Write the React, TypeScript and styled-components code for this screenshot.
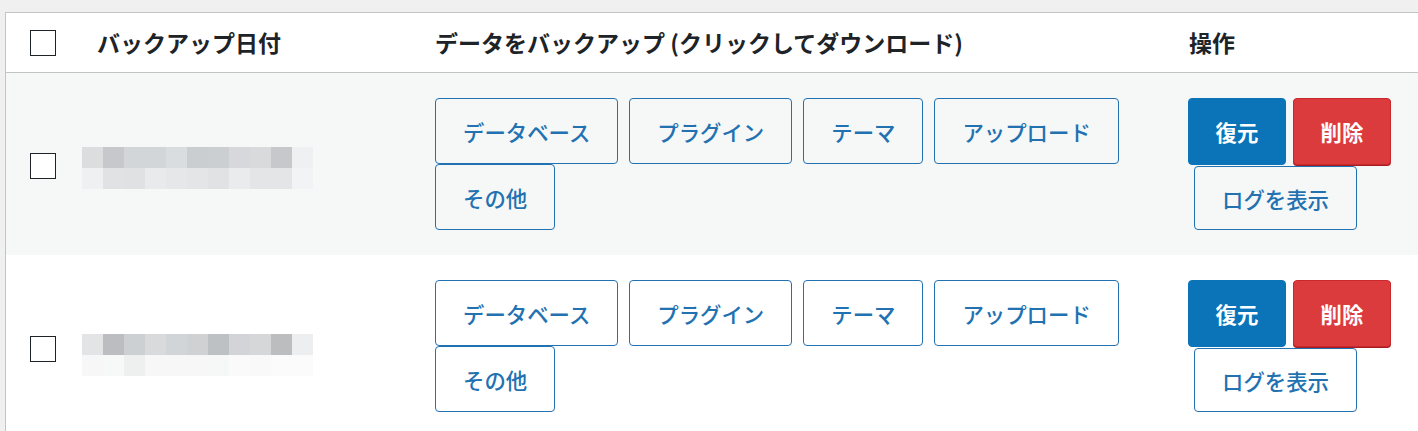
import React from "react";
import styled, { createGlobalStyle } from "styled-components";

const Global = createGlobalStyle`
  html, body { margin: 0; padding: 0; background: #f0f0f1; overflow: hidden; }
  body { font-family: "Noto Sans CJK JP", "Noto Sans", sans-serif; }
`;

const Page = styled.div`
  padding: 12px 0 0 5px;
`;

const Table = styled.div`
  width: 1440px;
  background: #fff;
  border: 1px solid #c3c4c7;
  border-right: none;
`;

const Grid = styled.div<{ $bg?: string }>`
  display: grid;
  grid-template-columns: 76px 343px 753px 1fr;
  align-items: center;
  background: ${(p) => p.$bg || "#fff"};
`;

const Header = styled(Grid)`
  height: 59px;
  border-bottom: 1px solid #c3c4c7;
`;

const HeadCell = styled.div<{ $pl?: number }>`
  padding-left: ${(p) => p.$pl ?? 10}px;
  font-size: 23px;
  font-weight: 700;
  color: #1d2327;
  white-space: nowrap;
  line-height: 1.3;
`;

const CheckCell = styled.div<{ $dy?: number }>`
  padding-left: 24px;
  display: flex;
  align-items: center;
  transform: translateY(${(p) => p.$dy ?? 0}px);
`;

const Check = styled.span`
  display: block;
  width: 24px;
  height: 24px;
  border: 1px solid #1d2327;
  background: #fff;
  box-sizing: content-box;
`;

const Row = styled(Grid)`
  padding: 25px 0;
`;

const BlurCell = styled.div<{ $dy?: number }>`
  display: grid;
  grid-template-columns: repeat(11, 21px);
  grid-auto-rows: 21px;
  transform: translateY(${(p) => p.$dy ?? 0}px);
`;

const Px = styled.span<{ $c: string }>`
  background: ${(p) => p.$c};
`;

const DataCell = styled.div`
  align-self: start;
  padding-left: 10px;
  display: flex;
  flex-wrap: wrap;
  align-content: flex-start;
  column-gap: 11px;
`;

const Btn = styled.button<{ $white?: boolean }>`
  box-sizing: border-box;
  height: 66px;
  padding: 0 27px;
  border: 1px solid #2271b1;
  border-radius: 4px;
  background: ${(p) => (p.$white ? "#fff" : "#f6f7f7")};
  color: #2271b1;
  font-family: "Noto Sans CJK JP", "Noto Sans", sans-serif;
  font-size: 21.4px;
  font-weight: 500;
  white-space: nowrap;
  cursor: pointer;
`;

const ActionCell = styled.div`
  align-self: start;
  padding-left: 10px;
  display: flex;
  flex-direction: column;
  align-items: flex-start;
`;

const ActionTop = styled.div`
  display: flex;
  gap: 7px;
`;

const Solid = styled.button<{ $red?: boolean }>`
  box-sizing: border-box;
  width: 98px;
  height: 67px;
  border: 1px solid ${(p) => (p.$red ? "#c9292d" : "#0b74b8")};
  border-radius: 4px;
  background: ${(p) => (p.$red ? "#dc3b3e" : "#0b74b8")};
  box-shadow: ${(p) => (p.$red ? "0 1px 0 #a51d21" : "none")};
  color: #fff;
  font-family: "Noto Sans CJK JP", "Noto Sans", sans-serif;
  font-size: 21.4px;
  font-weight: 700;
  cursor: pointer;
`;

const LogBtn = styled(Btn)`
  height: 64px;
  margin-left: 6px;
  margin-top: 1px;
`;

const blur1 = [
  ["#dcdddf", "#c6c8cb", "#d3d6d8", "#d3d6d8", "#dadddf", "#cbced1", "#cccfd1", "#d6d8db", "#d8dadc", "#c6c8cb", "#eef0f1"],
  ["#eef0f1", "#e0e2e3", "#dfe1e2", "#e8eaeb", "#e5e7e8", "#e3e5e6", "#e0e2e3", "#e9ebec", "#e3e5e6", "#e3e5e6", "#f2f3f4"],
];
const blur2 = [
  ["#e3e4e5", "#bbbdc0", "#cdd0d2", "#d8dadb", "#d2d5d7", "#cfd1d2", "#bec1c4", "#d2d4d7", "#d5d7d8", "#bcbdbf", "#eceef0"],
  ["#f7f7f8", "#f7f8f8", "#eef0f0", "#f7f7f7", "#f8f7f7", "#f7f7f8", "#f6f7f7", "#fafafa", "#f9f9f9", "#fbfbfb", "#fbfbfb"],
];

const dataButtons = ["データベース", "プラグイン", "テーマ", "アップロード", "その他"];

function BackupRow({ bg, blur, cbDy, blurDy }: { bg: string; blur: string[][]; cbDy: number; blurDy: number }) {
  const white = bg === "#fff";
  return (
    <Row $bg={bg}>
      <CheckCell $dy={cbDy}>
        <Check />
      </CheckCell>
      <BlurCell $dy={blurDy}>
        {blur.flat().map((c, i) => (
          <Px key={i} $c={c} />
        ))}
      </BlurCell>
      <DataCell>
        {dataButtons.map((b) => (
          <Btn key={b} $white={white}>{b}</Btn>
        ))}
      </DataCell>
      <ActionCell>
        <ActionTop>
          <Solid>復元</Solid>
          <Solid $red>削除</Solid>
        </ActionTop>
        <LogBtn $white={white}>ログを表示</LogBtn>
      </ActionCell>
    </Row>
  );
}

export default function App() {
  return (
    <Page>
      <Global />
      <Table>
        <Header>
          <CheckCell>
            <Check />
          </CheckCell>
          <HeadCell $pl={15}>バックアップ日付</HeadCell>
          <HeadCell>データをバックアップ (クリックしてダウンロード)</HeadCell>
          <HeadCell $pl={11}>操作</HeadCell>
        </Header>
        <BackupRow bg="#f6f7f7" blur={blur1} cbDy={2} blurDy={4} />
        <BackupRow bg="#fff" blur={blur2} cbDy={3} blurDy={9} />
      </Table>
    </Page>
  );
}
